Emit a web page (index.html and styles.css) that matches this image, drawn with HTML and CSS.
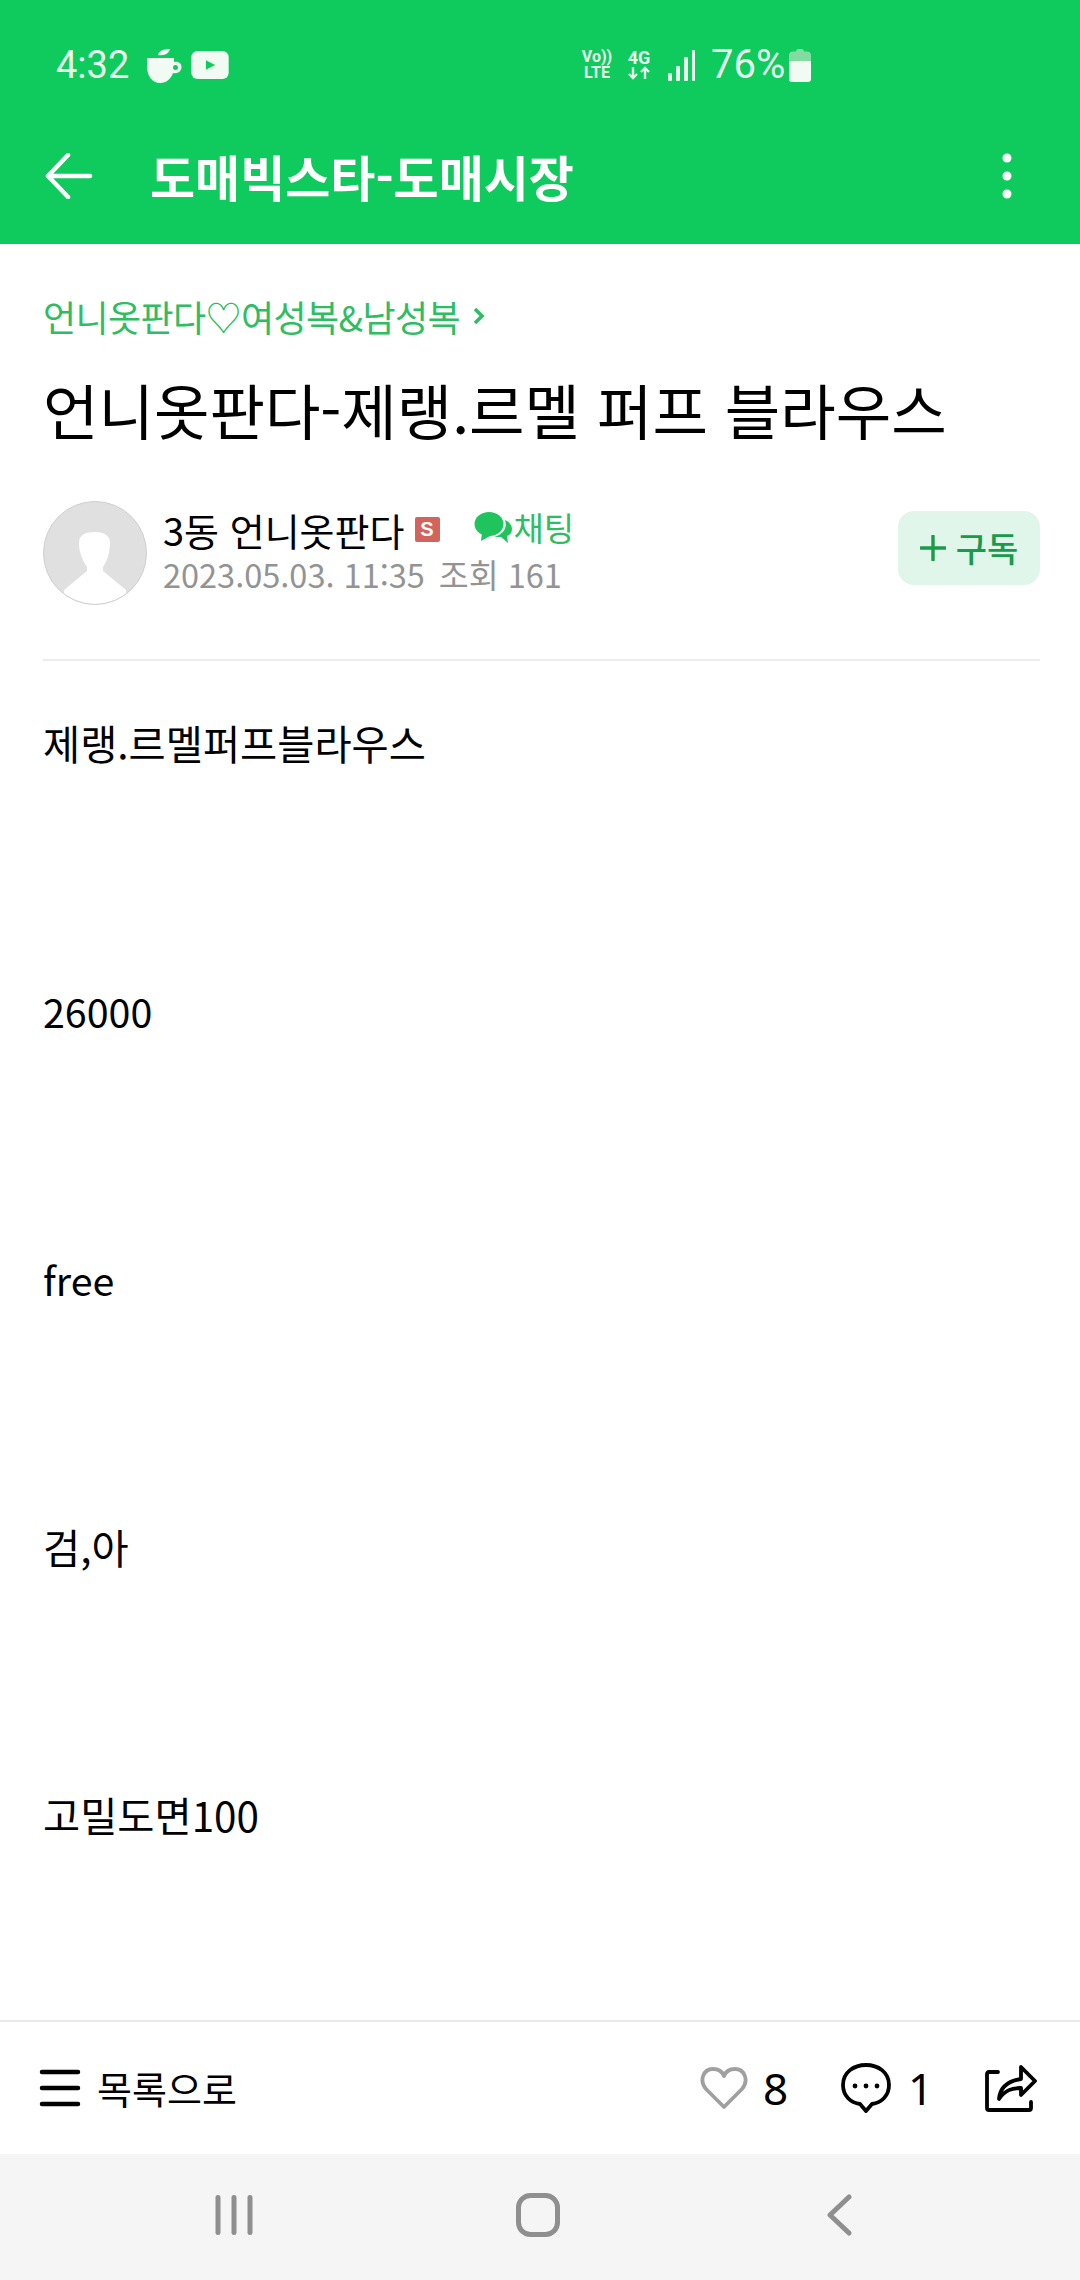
FILE: index.html
```html
<!DOCTYPE html>
<html lang="ko">
<head>
<meta charset="utf-8">
<title>도매빅스타-도매시장</title>
<link rel="stylesheet" href="styles.css">
</head>
<body>
<div class="screen">
  <header class="top">
    <div class="status">
      <div class="status-left">
        <span class="clock">4:32</span>
        <svg class="ic-cup" viewBox="0 0 36 36"><path d="M12 7C13 3 17 1 24 1 23 5 19 8 12 7Z" fill="#f1fbf4"/><path d="M1 10H28V14C33 13 35.500 16 35.500 19 35.500 23 32 26 27 25 25 31 20 35 14.500 35 6 35 1 28 1 18Z" fill="#f1fbf4"/><circle cx="29.500" cy="19.500" r="2.500" fill="#0fca5c"/></svg>
        <svg class="ic-yt" viewBox="0 0 36 27"><rect width="36" height="27" rx="6" fill="#f1fbf4"/><path d="M14 9L23 13.500 14 18Z" fill="#0fca5c"/></svg>
      </div>
      <div class="status-right">
        <span class="volte"><span>Vo))</span><span>LTE</span></span>
        <span class="net"><span>4G</span><svg class="ic-arrows" viewBox="0 0 24 14"><path d="M6 1V12M2 8L6 12 10 8M18 13V2M14 6L18 2 22 6" fill="none" stroke="#e8f9ee" stroke-width="2.400"/></svg></span>
        <svg class="ic-signal" viewBox="0 0 28 31"><rect x="0" y="23" width="4" height="8" rx="1" fill="#e8f9ee"/><rect x="8" y="16" width="4" height="15" rx="1" fill="#e8f9ee"/><rect x="16" y="7" width="4" height="24" rx="1" fill="#e8f9ee"/><rect x="24" y="0" width="3" height="31" rx="1" fill="#e8f9ee"/></svg>
        <span class="pct">76%</span>
        <svg class="ic-batt" viewBox="0 0 22 33"><path d="M7 2.500Q7 0 9 0H13Q15 0 15 2.500H18Q22 2.500 22 6.500V13H0V6.500Q0 2.500 4 2.500Z" fill="#83dc9f"/><path d="M0 12H22V30Q22 33 19 33H3Q0 33 0 30Z" fill="#f1fbf4"/></svg>
      </div>
    </div>
    <div class="appbar">
      <svg class="ic-back" viewBox="0 0 48 46"><path d="M45 23H3M23 2L3 23 23 44" fill="none" stroke="#fff" stroke-width="4.500" stroke-linecap="round" stroke-linejoin="round"/></svg>
      <h1 class="app-title">도매빅스타-도매시장</h1>
      <svg class="ic-more" viewBox="0 0 10 46"><circle cx="5" cy="5" r="4.500" fill="#fff"/><circle cx="5" cy="23" r="4.500" fill="#fff"/><circle cx="5" cy="41" r="4.500" fill="#fff"/></svg>
    </div>
  </header>

  <main class="content">
    <a class="crumb">언니옷판다♡여성복&amp;남성복<svg class="ic-chev" viewBox="0 0 12 20"><path d="M2 3L9 10 2 17" fill="none" stroke="#2fbd63" stroke-width="3.600"/></svg></a>
    <h2 class="title">언니옷판다-제랭.르멜 퍼프 블라우스</h2>
    <div class="meta">
      <svg class="avatar" viewBox="0 0 104 104"><defs><clipPath id="av"><circle cx="52" cy="52" r="51"/></clipPath></defs><circle cx="52" cy="52" r="51.500" fill="#e0e0e0"/><g clip-path="url(#av)"><path d="M36 42C36 34 42 31 52 31 62 31 67 35 67 42 67 52 64 60 60 66V70L83 89 84 104H20L21 89 44 70V66C40 60 36 52 36 42Z" fill="#fff"/></g><circle cx="52" cy="52" r="51.500" fill="none" stroke="#cfcfcf" stroke-width="1"/></svg>
      <div class="meta-text">
        <div class="author-row">
          <span class="author">3동 언니옷판다</span>
          <span class="badge">S</span>
          <svg class="ic-chat" viewBox="0 0 38 32"><path d="M31 8C36 10 38 14 38 17 38 21 36 23 33 24L34 31 27 25 20 25C28 23 34 17 31 8Z" fill="#1fc45d"/><ellipse cx="15" cy="12" rx="14.500" ry="12" fill="#1fc45d"/><path d="M8 20L7 29 18 23Z" fill="#1fc45d"/></svg>
          <span class="chat">채팅</span>
        </div>
        <div class="date"><span>2023.05.03. 11:35</span><span>조회 161</span></div>
      </div>
      <button class="sub"><svg class="ic-plus" viewBox="0 0 26 26"><path d="M13 1V25M1 13H25" fill="none" stroke="#1a9a4b" stroke-width="3.400" stroke-linecap="round"/></svg>구독</button>
    </div>
    <div class="post">
      <p>제랭.르멜퍼프블라우스</p>
      <p class="latin">26000</p>
      <p class="latin">free</p>
      <p>검,아</p>
      <p>고밀도면100</p>
    </div>
  </main>

  <footer class="actions">
    <svg class="ic-menu" viewBox="0 0 42 38"><path d="M3 3H39M3 19H39M3 35H39" fill="none" stroke="#000" stroke-width="4.500" stroke-linecap="round"/></svg>
    <span class="list">목록으로</span>
    <svg class="ic-heart" viewBox="0 0 48 44"><path d="M24 41L6 23C-1 15 3 3 13 3 18 3 22 5 24 10 26 5 30 3 35 3 45 3 49 15 42 23Z" fill="none" stroke="#a0a0a0" stroke-width="3.800" stroke-linejoin="round"/></svg>
    <span class="count c-like">8</span>
    <svg class="ic-comment" viewBox="0 0 50 50"><path d="M25 2C37 2 48 9 48 22 48 33 40 40 31 41L25 48 19 41C10 40 2 33 2 22 2 9 13 2 25 2Z" fill="none" stroke="#000" stroke-width="3.800" stroke-linejoin="round"/><circle cx="14" cy="23" r="2.400"/><circle cx="25" cy="23" r="2.400"/><circle cx="36" cy="23" r="2.400"/></svg>
    <span class="count c-comment">1</span>
    <svg class="ic-share" viewBox="0 0 52 48"><path d="M13 8H4Q2 8 2 10V44Q2 46 4 46H44Q46 46 46 44V38" fill="none" stroke="#000" stroke-width="3.800" stroke-linecap="round" stroke-linejoin="round"/><path d="M14 35C15 24 23 17 36 15V3L50 17 36 31V24C27 24 20 26 14 35Z" fill="none" stroke="#000" stroke-width="3.800" stroke-linejoin="round" stroke-linecap="round"/></svg>
  </footer>

  <nav class="navbar">
    <svg class="nav-recent" viewBox="0 0 38 40"><path d="M3 2.500V37.500M19 2.500V37.500M35 2.500V37.500" stroke="#8f8f8f" stroke-width="5" stroke-linecap="round"/></svg>
    <svg class="nav-home" viewBox="0 0 44 44"><rect x="2.500" y="2.500" width="39" height="39" rx="12" fill="none" stroke="#8f8f8f" stroke-width="5"/></svg>
    <svg class="nav-back" viewBox="0 0 26 42"><path d="M23 3L4 21 23 39" fill="none" stroke="#8f8f8f" stroke-width="5" stroke-linecap="round" stroke-linejoin="round"/></svg>
  </nav>
</div>
</body>
</html>
```
FILE: styles.css
```css
* { box-sizing: border-box; }
html, body { margin: 0; padding: 0; }
body { background: #fff; font-family: "Noto Sans CJK KR", "Noto Sans", sans-serif; color: #000; }
svg { display: block; flex: none; }
.screen { width: 1080px; height: 2280px; display: flex; flex-direction: column; overflow: hidden; }

.top { background: #0fca5c; height: 244px; flex: none; }
.status { height: 90px; padding: 47px 0 0 56px; display: flex; }
.status-left { display: flex; align-items: center; height: 36px; }
.clock { font: 38px/36px Roboto, sans-serif; color: #e8f9ee; width: 90px; }
.ic-cup { width: 36px; height: 36px; margin-top: 1px; }
.ic-yt { width: 38px; height: 28px; margin-left: 9px; }
.status-right { display: flex; align-items: center; height: 36px; margin-left: 352px; }
.volte, .net { display: flex; flex-direction: column; font: 700 16px/16px Roboto, sans-serif; color: #e8f9ee; align-items: center; }
.volte { width: 32px; }
.net { width: 24px; margin-left: 14px; font-size: 18px; }
.ic-arrows { width: 24px; height: 14px; }
.ic-signal { width: 28px; height: 31px; margin-left: 17px; }
.pct { font: 40px/36px Roboto, sans-serif; color: #e8f9ee; margin-left: 15px; width: 78px; }
.ic-batt { width: 22px; height: 33px; margin-top: 1px; }

.appbar { height: 154px; display: flex; align-items: center; padding: 18px 0 0 45px; }
.ic-back { width: 48px; height: 46px; }
.app-title { margin: 0 0 0 57px; font-size: 49px; font-weight: 700; line-height: 60px; color: #fff; flex: 1; }
.ic-more { width: 10px; height: 46px; margin-right: 68px; margin-left: auto; }

.content { flex: 1; padding: 48px 40px 0 43px; min-height: 0; overflow: hidden; }
.crumb { display: flex; align-items: center; font-size: 36px; line-height: 48px; color: #2fbd63; letter-spacing: -0.6px; }
.ic-chev { width: 12px; height: 20px; margin-left: 13px; }
.title { margin: 33px 0 0; font-size: 60.3px; font-weight: 400; line-height: 72px; }

.meta { display: flex; align-items: center; margin-top: 56px; height: 104px; }
.avatar { width: 104px; height: 104px; }
.meta-text { margin: 0 0 7px 16px; flex: 1; }
.author-row { display: flex; align-items: center; height: 47px; }
.author { font-size: 38px; line-height: 47px; }
.badge { width: 25px; height: 25px; margin-left: 10px; background: #d2645c; color: #fff; font: 700 20px/25px "Liberation Sans", sans-serif; text-align: center; border-radius: 2px; }
.ic-chat { width: 38px; height: 32px; margin: 0 0 2px 34px; }
.chat { font-size: 33px; line-height: 43px; height: 47px; color: #2fbd63; margin-left: 2px; }
.date { display: flex; gap: 14px; font-size: 32.5px; line-height: 41px; color: #939393; }
.sub { width: 142px; height: 74px; border: 0; border-radius: 16px; background: #e0f6ea; color: #1a9a4b; font: 500 34px/74px "Noto Sans CJK KR", sans-serif; padding: 0; margin-bottom: 11px; display: flex; align-items: center; justify-content: center; }
.ic-plus { width: 26px; height: 26px; margin-right: 10px; }

.post { margin-top: 54px; border-top: 2px solid #ededed; padding-top: 50px; }
.post p { margin: 0 0 204px; font-size: 40.4px; line-height: 64px; }
.post .latin { font-size: 39.4px; }

.actions { height: 134px; flex: none; border-top: 2px solid #e9e9e9; display: flex; align-items: center; padding: 0 0 0 39px; }
.ic-menu { width: 42px; height: 38px; }
.list { font-size: 38px; line-height: 48px; margin-left: 16px; flex: 1; }
.ic-heart { width: 48px; height: 44px; }
.count { font: 44px/48px "Noto Sans", sans-serif; }
.c-like { margin-left: 15px; width: 78px; }
.ic-comment { width: 50px; height: 50px; }
.c-comment { margin-left: 17px; width: 77px; }
.ic-share { width: 52px; height: 48px; margin-right: 43px; }

.navbar { height: 126px; flex: none; background: #f5f5f5; display: flex; align-items: center; padding: 0 0 5px 215px; }
.nav-recent { width: 38px; height: 40px; }
.nav-home { width: 44px; height: 44px; margin-left: 263px; }
.nav-back { width: 26px; height: 42px; margin-left: 266px; }
```
